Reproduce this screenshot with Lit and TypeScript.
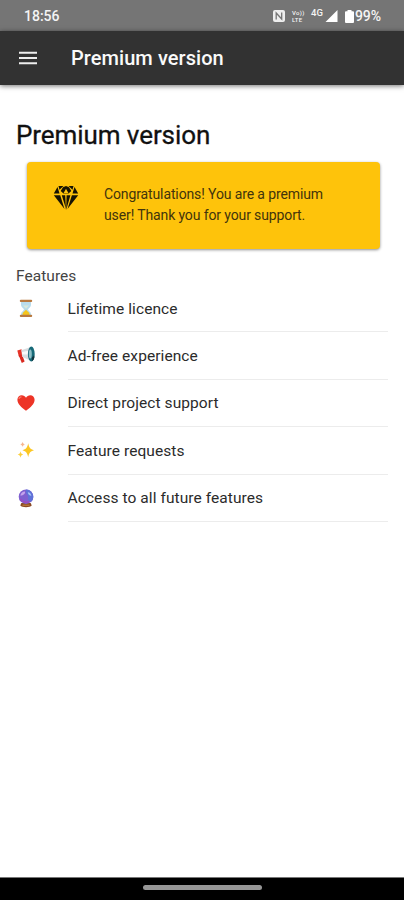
import { LitElement, html, css, svg } from "lit";
import { customElement } from "lit/decorators.js";

const hourglass = svg`
  <path d="M4 3h10v3c0 2-3 3.500-3 4.500s3 2.500 3 4.500v2H4v-2c0-2 3-3.500 3-4.500S4 8 4 6z" fill="#b9dcec"/>
  <path d="M5.500 15c0-2 2.500-2.500 3.500-4.500 1 2 3.500 2.500 3.500 4.500v1.500h-7z" fill="#f6c51c"/>
  <path d="M6 6.500h6L9 9.500z" fill="#dbe9d8"/>
  <rect x="2.800" y="0.800" width="12.400" height="2.300" rx="1" fill="#b9793f"/>
  <rect x="2.800" y="15.800" width="12.400" height="2.300" rx="1" fill="#b9793f"/>`;

const megaphone = svg`
  <path d="M0.300 4.500 4.500 3.200 5.500 10 2 11z" fill="#e63327"/>
  <path d="M1.600 9 5 8.400 7.600 15.500 4.800 17z" fill="#d92a20"/>
  <path d="M4.300 4.300 13 1.200v13.400L5.200 10.700z" fill="#d9dde0"/>
  <path d="M5 6 13 4.500v4L5 8.500z" fill="#f8fafa"/>
  <ellipse cx="14.300" cy="8" rx="3.400" ry="7.400" fill="#176a78"/>
  <ellipse cx="13.300" cy="8" rx="1.500" ry="4.600" fill="#8fbfc6"/>
  <path d="M15 11c1 0 1.700-1 2-2.300l.4 2.600c-.3 1.700-1.200 3.400-2.500 3.900z" fill="#12343c"/>`;

const heart = svg`
  <path d="M9 16.800C4.500 13.200.4 10 .4 5.700.4 3 2.300 1.200 4.700 1.200 6.500 1.200 8.200 2.200 9 3.800c.8-1.600 2.500-2.600 4.300-2.600 2.400 0 4.300 1.800 4.300 4.500 0 4.300-4.100 7.500-8.600 11.100z" fill="#ed3426"/>
  <path d="M2 5c.2-1.400 1.200-2.200 2.500-2.200" stroke="#f8786b" stroke-width="1.200" fill="none"/>`;

const sparkles = svg`
  <path d="M11.200 2.200c.9 4.300 2 5.900 5.800 7-3.800 1.100-4.900 2.700-5.800 7-.9-4.300-2-5.900-5.800-7 3.800-1.100 4.900-2.700 5.800-7z" fill="#fcc722"/>
  <path d="M3.500 10.300c.4 2 .9 2.800 2.800 3.300-1.900.5-2.400 1.200-2.800 3.200-.4-2-.9-2.700-2.800-3.200 1.900-.5 2.400-1.300 2.800-3.300z" fill="#fccf3d"/>
  <path d="M5.600 .8c.4 1.500.8 2.200 2.400 2.600-1.600.4-2 1.100-2.400 2.600-.4-1.500-.8-2.200-2.400-2.600C4.800 3 5.200 2.300 5.600.8z" fill="#f7b690"/>`;

const crystal = svg`
  <path d="M4.300 14h9.400l1 2.500c-1.500 2.200-9.900 2.200-11.400 0z" fill="#8b4a25"/>
  <circle cx="9" cy="7.700" r="7.300" fill="#7f5fd0"/>
  <path d="M9 .4a7.300 7.300 0 0 1 5.500 12c-2.500.3-4-1.200-3.500-3.800C11.600 5.500 8 5 9 .4z" fill="#5f72d8"/>
  <path d="M3.300 6.500C4 3.500 6 2.300 8 2.400c.5 2.200-1.700 4.300-4.700 4.100z" fill="#c4a3ec"/>
  <path d="M10.800 3.200c2 .2 3.200 1.500 3.600 3.500-1.800.1-3.300-1.200-3.600-3.500z" fill="#a8c5f5"/>
  <path d="M3.500 10c1.800 3.300 6.500 4 8.500 2.500" stroke="#9d4bc0" stroke-width="1.500" fill="none"/>
  <path d="M5.500 16.200h7" stroke="#c48742" stroke-width="1"/>`;

const features = [
  { icon: hourglass, label: "Lifetime licence" },
  { icon: megaphone, label: "Ad-free experience" },
  { icon: heart, label: "Direct project support" },
  { icon: sparkles, label: "Feature requests" },
  { icon: crystal, label: "Access to all future features" },
];

@customElement("app-root")
export class AppRoot extends LitElement {
  static styles = css`
    :host {
      display: flex;
      flex-direction: column;
      height: 900px;
      background: #fff;
      font-family: Roboto, sans-serif;
      color: #2b2b2b;
      overflow: hidden;
    }
    svg { display: block; flex: none; }
    .status {
      flex: none;
      height: 31px;
      box-sizing: border-box;
      padding: 1px 22px 0 24px;
      background: #757575;
      color: #f4f4f4;
      display: flex;
      align-items: center;
      font-size: 14px;
      font-weight: 500;
    }
    .time { flex: 1; }
    .nfc { margin-right: 7px; }
    .volte {
      display: flex;
      flex-direction: column;
      font-size: 6px;
      line-height: 7px;
      width: 15px;
      margin-right: 4px;
      white-space: nowrap;
      letter-spacing: 0.300px;
    }
    .net { font-size: 9.500px; line-height: 10px; margin: -6px 2px 0 0; width: 12px; }
    .signal { margin-right: 7px; }
    .battery { margin-right: 1px; }
    .pct { width: 27px; letter-spacing: -0.100px; white-space: nowrap; }
    .bar {
      flex: none;
      height: 54px;
      background: #323232;
      color: #fafafa;
      display: flex;
      align-items: center;
      padding-left: 19px;
      box-shadow: 0 1px 5px rgba(0, 0, 0, 0.55);
    }
    .title { margin-left: 34px; font-size: 20px; font-weight: 500; letter-spacing: 0.060px; }
    main { flex: 1; padding: 34px 16px 0; }
    h1 {
      margin: 0;
      height: 43px;
      line-height: 33px;
      font-size: 26px;
      font-weight: 400;
      letter-spacing: -0.080px;
      -webkit-text-stroke: 0.300px #111;
      color: #111;
    }
    .card {
      display: flex;
      height: 86.500px;
      margin: 0 8px 0 10.500px;
      box-sizing: border-box;
      padding: 22px 0 0 26px;
      background: #fec30b;
      border-radius: 4px;
      box-shadow: 0 1px 3px rgba(0, 0, 0, 0.45);
      color: #42340c;
      font-size: 14px;
      line-height: 21px;
      letter-spacing: -0.120px;
    }
    .diamond { margin-top: 0.500px; }
    .card p { margin: 0 0 0 25.500px; white-space: nowrap; }
    h2 {
      margin: 17.500px 0 0;
      height: 19px;
      line-height: 20px;
      font-size: 15.500px;
      font-weight: 400;
      letter-spacing: 0.050px;
      color: #444;
    }
    ul { list-style: none; margin: 0; padding: 0; }
    li { display: flex; height: 47.400px; }
    li svg { margin: 14px 32.500px 0 1px; }
    .label {
      flex: 1;
      box-sizing: border-box;
      border-bottom: 1px solid #ececec;
      padding-top: 13.500px;
      line-height: 20px;
      font-size: 15.500px;
      letter-spacing: 0.080px;
    }
    .nav {
      flex: none;
      height: 23px;
      box-sizing: border-box;
      background: #000;
      border-top: 1px solid #777;
      display: flex;
      justify-content: center;
      padding-top: 7px;
    }
    .pill { width: 119px; height: 5px; border-radius: 3px; background: #969696; }
  `;

  render() {
    return html`
      <div class="status">
        <span class="time">18:56</span>
        <svg class="nfc" width="12" height="12" viewBox="0 0 12 12">
          <rect width="12" height="12" rx="2" fill="#eee" />
          <path d="M3.200 9.500V3l5.500 6V2.500" stroke="#757575" stroke-width="1.300" fill="none" />
        </svg>
        <span class="volte"><span>Vo))</span><span>LTE</span></span>
        <span class="net">4G</span>
        <svg class="signal" width="13" height="12" viewBox="0 0 13 12"><path d="M12.500 0v12H.5z" fill="#fff" /></svg>
        <svg class="battery" width="9" height="13" viewBox="0 0 9 13">
          <path d="M2.500 0h4v1.300H8a1 1 0 0 1 1 1V12a1 1 0 0 1-1 1H1a1 1 0 0 1-1-1V2.300a1 1 0 0 1 1-1h1.500z" fill="#fff" />
        </svg>
        <span class="pct">99%</span>
      </div>
      <div class="bar">
        <svg width="18" height="14" viewBox="0 0 18 14">
          <path d="M0 1.700h18M0 7h18M0 12.300h18" stroke="#eee" stroke-width="2.100" />
        </svg>
        <span class="title">Premium version</span>
      </div>
      <main>
        <h1>Premium version</h1>
        <div class="card">
          <svg class="diamond" width="26" height="26" viewBox="0 0 26 26">
            <path
              d="M5.500 1h5L6.500 4.800zM15.500 1h5l-1 3.800zM10 2.200 13 1l3 1.200L18.300 6 15.500 8.500h-5L7.700 6zM4.500 2 6.500 8.500H.8zM21.500 2l3.700 6.500h-5.700z"
              fill="#171303"
            />
            <path d="M10.500 8.200 13 3.800l2.500 4.400z" fill="#fec30b" />
            <path d="M.8 10.300h6.400L11.500 24zM8.800 10.300h3.400L13 25l-.6-3zM13.600 10.300h3.800L13.200 25zM18.900 10.300h6.300L14.500 24z" fill="#171303" />
          </svg>
          <p>Congratulations! You are a premium<br />user! Thank you for your support.</p>
        </div>
        <h2>Features</h2>
        <ul>
          ${features.map(
            (f) => html`<li>
              <svg width="18" height="19" viewBox="0 0 18 19">${f.icon}</svg>
              <span class="label">${f.label}</span>
            </li>`
          )}
        </ul>
      </main>
      <div class="nav"><div class="pill"></div></div>
    `;
  }
}
